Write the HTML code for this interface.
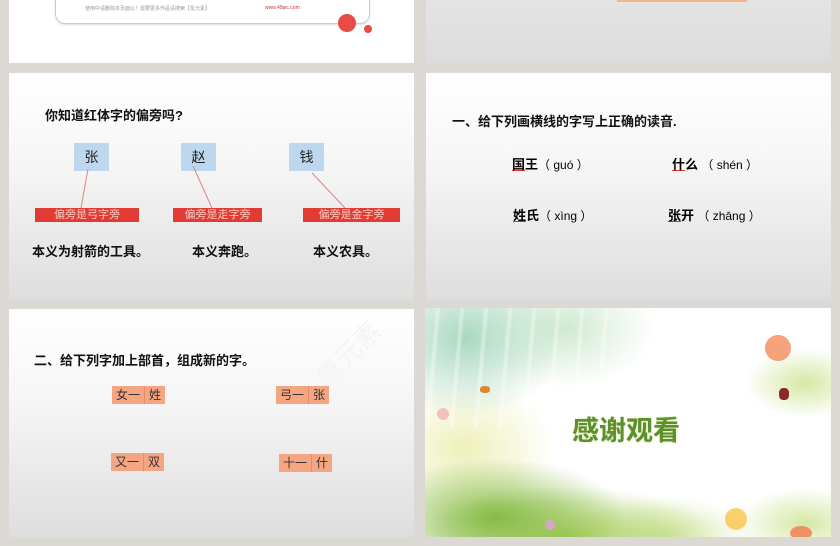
<!DOCTYPE html>
<html><head><meta charset="utf-8"><style>
*{margin:0;padding:0;box-sizing:border-box}
body{width:840px;height:546px;background:#dcd8d3;position:relative;overflow:hidden;font-family:"Liberation Sans","Noto Sans CJK SC",sans-serif}
.p{position:absolute;overflow:hidden}
.g{background:linear-gradient(#fff 0%,#f6f6f6 40%,#dedede 100%)}
.a{position:absolute;white-space:nowrap}
.b{font-weight:bold;color:#111}
.blue{position:absolute;background:#bdd7ee;width:35px;height:28px;text-align:center;line-height:28px;font-size:14px;color:#222}
.red{position:absolute;background:#e23b33;height:14px;color:#f6c9c0;font-size:11px;text-align:center;line-height:14px}
.or{position:absolute;background:#f4a582;height:18px;font-size:12px;line-height:18px;color:#333;display:flex}
.or span{padding:0 4px}
.or span+span{border-left:1px solid #e58d68}
u{text-decoration:underline;text-decoration-color:#d33}
</style></head><body>
<div class="p" style="left:9px;top:0;width:405px;height:63px;background:#fff">
 <div style="position:absolute;left:46px;top:-20px;width:315px;height:44px;border:1px solid #ccc;border-radius:10px;box-shadow:0 1px 2px #ddd"></div>
 <div class="a" style="left:76px;top:5px;font-size:5px;color:#999">使用中请删除本页面以！需要更多作品请搜索【氢元素】</div>
 <div class="a" style="left:256px;top:5px;font-size:5px;color:#c33">www.49pic.com</div>
 <div style="position:absolute;left:329px;top:14px;width:18px;height:18px;border-radius:50%;background:#e84c47"></div>
 <div style="position:absolute;left:355px;top:25px;width:8px;height:8px;border-radius:50%;background:#e84c47"></div>
</div>
<div class="p" style="left:426px;top:0;width:405px;height:63px;background:linear-gradient(#e4e4e4,#dcdcdc)">
 <div style="position:absolute;left:191px;top:0;width:130px;height:2px;background:#f5b48e"></div>
</div>

<div class="p g" style="left:9px;top:73px;width:405px;height:227px">
 <div class="a b" style="left:36px;top:32px;font-size:13px">你知道红体字的偏旁吗?</div>
 <div class="blue" style="left:65px;top:70px">张</div>
 <div class="blue" style="left:172px;top:70px">赵</div>
 <div class="blue" style="left:280px;top:70px">钱</div>
 <svg style="position:absolute;left:0;top:0" width="405" height="227"><g stroke="#d98a80" stroke-width="1"><line x1="79" y1="96" x2="72" y2="135"/><line x1="184" y1="93" x2="203" y2="135"/><line x1="303" y1="100" x2="336" y2="135"/></g></svg>
 <div class="red" style="left:26px;top:135px;width:104px">偏旁是弓字旁</div>
 <div class="red" style="left:164px;top:135px;width:89px">偏旁是走字旁</div>
 <div class="red" style="left:294px;top:135px;width:97px">偏旁是金字旁</div>
 <div class="a b" style="left:23px;top:168px;font-size:13px">本义为射箭的工具。</div>
 <div class="a b" style="left:183px;top:168px;font-size:13px">本义奔跑。</div>
 <div class="a b" style="left:304px;top:168px;font-size:13px">本义农具。</div>
</div>

<div class="p g" style="left:426px;top:73px;width:405px;height:227px">
 <div class="a b" style="left:26px;top:38px;font-size:13px">一、给下列画横线的字写上正确的读音.</div>
 <div class="a" style="left:86px;top:81px;font-size:12px"><b style="font-size:13px"><u>国</u>王</b>（ guó ）</div>
 <div class="a" style="left:246px;top:81px;font-size:12px"><b style="font-size:13px"><u>什</u>么</b> （ shén ）</div>
 <div class="a" style="left:87px;top:132px;font-size:12px"><b style="font-size:13px"><u>姓</u>氏</b>（ xìng ）</div>
 <div class="a" style="left:242px;top:132px;font-size:12px"><b style="font-size:13px"><u>张</u>开</b> （ zhāng ）</div>
</div>

<div class="p g" style="left:9px;top:309px;width:405px;height:228px">
 <div class="a" style="left:300px;top:25px;font-size:26px;color:#f4f4f4;transform:rotate(-45deg)">氢元素</div>
 <div class="a b" style="left:25px;top:41px;font-size:13px">二、给下列字加上部首，组成新的字。</div>
 <div class="or" style="left:103px;top:77px"><span>女一</span><span>姓</span></div>
 <div class="or" style="left:267px;top:77px"><span>弓一</span><span>张</span></div>
 <div class="or" style="left:102px;top:144px"><span>又一</span><span>双</span></div>
 <div class="or" style="left:270px;top:145px"><span>十一</span><span>什</span></div>
</div>

<div class="p" style="left:425px;top:308px;width:406px;height:229px;background:#fff">
 <div style="position:absolute;left:0;top:0;width:406px;height:229px;background:
 radial-gradient(ellipse 130px 60px at 70px 210px,#86bb45,transparent),
 radial-gradient(ellipse 150px 50px at 140px 228px,#a6cd5c,transparent),
 radial-gradient(ellipse 100px 80px at 40px 30px,#a9d8c0,transparent),
 radial-gradient(ellipse 90px 60px at 140px 20px,#cfead0,transparent),
 radial-gradient(ellipse 90px 40px at 240px 228px,#d6e9a8,transparent),
 radial-gradient(ellipse 60px 35px at 380px 75px,#d5e8a4,transparent),
 radial-gradient(ellipse 70px 35px at 380px 215px,#d5e8a4,transparent),
 radial-gradient(ellipse 90px 70px at 40px 140px,#eef0bb,transparent)"></div>
 <div style="position:absolute;left:0;top:0;width:200px;height:120px;background:repeating-linear-gradient(95deg,rgba(255,255,255,0) 0 10px,rgba(255,255,255,.5) 12px 14px,rgba(255,255,255,0) 16px 24px);opacity:.7"></div>
 <div style="position:absolute;left:340px;top:27px;width:26px;height:26px;border-radius:50%;background:#f48b5a;opacity:.8"></div>
 <div style="position:absolute;left:300px;top:200px;width:22px;height:22px;border-radius:50%;background:#f7c64a;opacity:.8"></div>
 <div style="position:absolute;left:365px;top:218px;width:22px;height:14px;border-radius:50%;background:#f07a50;opacity:.8"></div>
 <div style="position:absolute;left:12px;top:100px;width:12px;height:12px;border-radius:50%;background:#f5b0b8;opacity:.8"></div>
 <div style="position:absolute;left:120px;top:212px;width:10px;height:10px;border-radius:50%;background:#e0a0e0;opacity:.8"></div>
 <div style="position:absolute;left:354px;top:80px;width:10px;height:12px;border-radius:40%;background:#8a2a2a"></div>
 <div style="position:absolute;left:55px;top:78px;width:10px;height:7px;border-radius:40%;background:#d98a30"></div>
 <div class="a" style="left:147px;top:101px;font-size:27px;font-weight:bold;color:#5f8f2c;text-shadow:0 0 2px #cde3a0">感谢观看</div>
</div>
</body></html>
